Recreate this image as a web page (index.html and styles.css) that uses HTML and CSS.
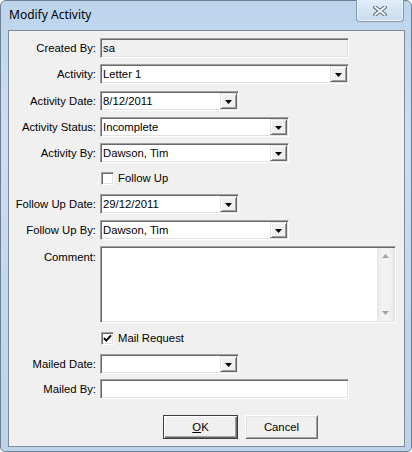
FILE: index.html
```html
<!DOCTYPE html>
<html>
<head>
<meta charset="utf-8">
<link rel="stylesheet" href="styles.css">
</head>
<body>
<div class="window">
  <div class="titlebar">
    <span class="title">Modify Activity</span>
    <div class="close">
      <svg width="14" height="10" viewBox="0 0 14 10">
        <path d="M2.2 1.2 L11.8 8.8 M11.8 1.2 L2.2 8.8" stroke="#5f6c7b" stroke-width="3.8" stroke-linecap="square"/>
        <path d="M2.2 1.2 L11.8 8.8 M11.8 1.2 L2.2 8.8" stroke="#fafcfe" stroke-width="1.8" stroke-linecap="square"/>
      </svg>
    </div>
  </div>
  <div class="client">
    <div class="form">
      <div class="row">
        <span class="lbl">Created By:</span>
        <div class="field readonly w-long"><span class="txt">sa</span></div>
      </div>
      <div class="row">
        <span class="lbl">Activity:</span>
        <div class="field w-long"><span class="txt">Letter 1</span><span class="dd"><svg width="7" height="4" viewBox="0 0 7 4"><polygon points="0,0 7,0 3.5,4" fill="#000"/></svg></span></div>
      </div>
      <div class="row down1">
        <span class="lbl">Activity Date:</span>
        <div class="field w-short"><span class="txt">8/12/2011</span><span class="dd"><svg width="7" height="4" viewBox="0 0 7 4"><polygon points="0,0 7,0 3.5,4" fill="#000"/></svg></span></div>
      </div>
      <div class="row">
        <span class="lbl">Activity Status:</span>
        <div class="field w-mid"><span class="txt">Incomplete</span><span class="dd"><svg width="7" height="4" viewBox="0 0 7 4"><polygon points="0,0 7,0 3.5,4" fill="#000"/></svg></span></div>
      </div>
      <div class="row">
        <span class="lbl">Activity By:</span>
        <div class="field w-mid"><span class="txt">Dawson, Tim</span><span class="dd"><svg width="7" height="4" viewBox="0 0 7 4"><polygon points="0,0 7,0 3.5,4" fill="#000"/></svg></span></div>
      </div>
      <div class="row up1">
        <span class="lbl"></span>
        <span class="check"></span>
        <span class="checklbl">Follow Up</span>
      </div>
      <div class="row">
        <span class="lbl">Follow Up Date:</span>
        <div class="field w-short"><span class="txt">29/12/2011</span><span class="dd"><svg width="7" height="4" viewBox="0 0 7 4"><polygon points="0,0 7,0 3.5,4" fill="#000"/></svg></span></div>
      </div>
      <div class="row">
        <span class="lbl">Follow Up By:</span>
        <div class="field w-mid"><span class="txt">Dawson, Tim</span><span class="dd"><svg width="7" height="4" viewBox="0 0 7 4"><polygon points="0,0 7,0 3.5,4" fill="#000"/></svg></span></div>
      </div>
      <div class="row tall">
        <span class="lbl top">Comment:</span>
        <div class="field memo">
          <span class="memo-text"></span>
          <span class="vscroll">
            <svg width="7" height="4" viewBox="0 0 7 4"><polygon points="0,4 7,4 3.5,0" fill="#a3a3a3"/></svg>
            <svg width="7" height="4" viewBox="0 0 7 4"><polygon points="0,0 7,0 3.5,4" fill="#a3a3a3"/></svg>
          </span>
        </div>
      </div>
      <div class="row up1">
        <span class="lbl"></span>
        <span class="check"><svg width="11" height="11" viewBox="0 0 11 11"><polyline points="2,5 4.3,7.6 9,2.3" fill="none" stroke="#000" stroke-width="1.9"/></svg></span>
        <span class="checklbl">Mail Request</span>
      </div>
      <div class="row">
        <span class="lbl">Mailed Date:</span>
        <div class="field w-short"><span class="txt"></span><span class="dd"><svg width="7" height="4" viewBox="0 0 7 4"><polygon points="0,0 7,0 3.5,4" fill="#000"/></svg></span></div>
      </div>
      <div class="row up1">
        <span class="lbl">Mailed By:</span>
        <div class="field w-long"><span class="txt"></span></div>
      </div>
      <div class="buttons">
        <div class="btn default"><span><span class="u">O</span>K</span></div>
        <div class="btn cancel"><span>Cancel</span></div>
      </div>
    </div>
  </div>
</div>
</body>
</html>
```

FILE: styles.css
```css
html, body {
  margin: 0;
  padding: 0;
  width: 412px;
  height: 452px;
  overflow: hidden;
  background: #ffffff;
}

.window {
  box-sizing: border-box;
  width: 412px;
  height: 452px;
  border: 1px solid #6f7f90;
  border-radius: 6px 6px 5px 5px;
  background: linear-gradient(180deg, #bcd4ec 0%, #cbdff2 30%, #c3d9ee 60%, #bcd3ea 100%);
  display: flex;
  flex-direction: column;
}

.titlebar {
  height: 29px;
  display: flex;
  align-items: flex-start;
}

.title {
  font-family: "Noto Sans", "Open Sans", sans-serif;
  font-size: 12px;
  color: #000;
  padding-left: 8px;
  padding-top: 5px;
  line-height: 17px;
}

.close {
  margin-left: auto;
  margin-right: 7px;
  margin-top: -1px;
  box-sizing: border-box;
  width: 48px;
  height: 22px;
  border: 1px solid #8697aa;
  border-top: none;
  border-radius: 0 0 4px 4px;
  background: linear-gradient(180deg, #e2edf8 0%, #d4e4f3 50%, #c9dcef 100%);
  box-shadow: inset 0 -1px 0 #eef5fb, inset 1px 0 0 #eaf2fa, inset -1px 0 0 #eaf2fa;
  display: flex;
  align-items: center;
  justify-content: center;
}

.close svg {
  margin-top: 1px;
}

.client {
  box-sizing: border-box;
  width: 397px;
  height: 417px;
  margin-left: 7px;
  border: 1px solid #7f8a96;
  background: #f0f0f0;
  font-family: "Liberation Sans", Arial, sans-serif;
  font-size: 11.3px;
  color: #000;
}

.form {
  display: flex;
  flex-direction: column;
  gap: 6px;
  padding-top: 7px;
}

.row {
  display: flex;
  align-items: center;
  height: 20px;
}

.row.tall {
  height: 77px;
  align-items: flex-start;
}

.down1 { margin-top: 1px; }
.up1 { margin-top: -1px; }

.lbl {
  width: 87px;
  margin-right: 4px;
  text-align: right;
  white-space: nowrap;
  flex: none;
}

.lbl.top {
  padding-top: 5px;
}

.field {
  box-sizing: border-box;
  height: 20px;
  padding: 1px;
  border: 1px solid;
  border-color: #a0a0a0 #ffffff #ffffff #a0a0a0;
  box-shadow: inset 1px 1px 0 #696969, inset -1px -1px 0 #e3e3e3;
  background: #ffffff;
  display: flex;
  align-items: stretch;
  flex: none;
}

.field.readonly {
  background: #f0f0f0;
}

.w-long { width: 249px; }
.w-mid { width: 189px; }
.w-short { width: 139px; }

.txt {
  flex: 1;
  padding-left: 1px;
  line-height: 16px;
  white-space: nowrap;
  overflow: hidden;
}

.dd {
  box-sizing: border-box;
  width: 17px;
  height: 16px;
  border: 1px solid;
  border-color: #e3e3e3 #696969 #696969 #e3e3e3;
  box-shadow: inset 1px 1px 0 #ffffff, inset -1px -1px 0 #a0a0a0;
  background: #f0f0f0;
  display: flex;
  align-items: center;
  justify-content: center;
  flex: none;
}

.dd svg {
  margin-top: 1px;
}

.memo {
  width: 296px;
  height: 77px;
}

.memo-text {
  flex: 1;
}

.vscroll {
  width: 17px;
  background: linear-gradient(90deg, #e6e6e6 0%, #f0f0f0 20%, #f3f3f3 50%, #f0f0f0 80%, #e6e6e6 100%);
  display: flex;
  flex-direction: column;
  align-items: center;
  justify-content: space-between;
  padding: 6px 0 6px 0;
  box-sizing: border-box;
}

.check {
  box-sizing: border-box;
  width: 13px;
  height: 13px;
  margin-left: 1px;
  border: 1px solid;
  border-color: #a0a0a0 #ffffff #ffffff #a0a0a0;
  box-shadow: inset 1px 1px 0 #696969, inset -1px -1px 0 #e3e3e3;
  background: #ffffff;
  display: flex;
  align-items: center;
  justify-content: center;
  flex: none;
}

.check svg {
  flex: none;
}

.checklbl {
  margin-left: 4px;
  white-space: nowrap;
}

.buttons {
  display: flex;
  gap: 7px;
  margin-top: 10px;
  padding-left: 154px;
}

.btn {
  box-sizing: border-box;
  height: 24px;
  display: flex;
  align-items: center;
  justify-content: center;
  background: #f0f0f0;
  border: 1px solid;
}

.btn.default {
  width: 75px;
  border-color: #3c3c3c;
  box-shadow: inset 1px 1px 0 #ffffff, inset -1px -1px 0 #696969, inset -2px -2px 0 #a0a0a0;
}

.btn.cancel {
  width: 73px;
  border-color: #ffffff #696969 #696969 #ffffff;
  box-shadow: inset 1px 1px 0 #e3e3e3, inset -1px -1px 0 #a0a0a0;
}

.u {
  text-decoration: underline;
}
```
